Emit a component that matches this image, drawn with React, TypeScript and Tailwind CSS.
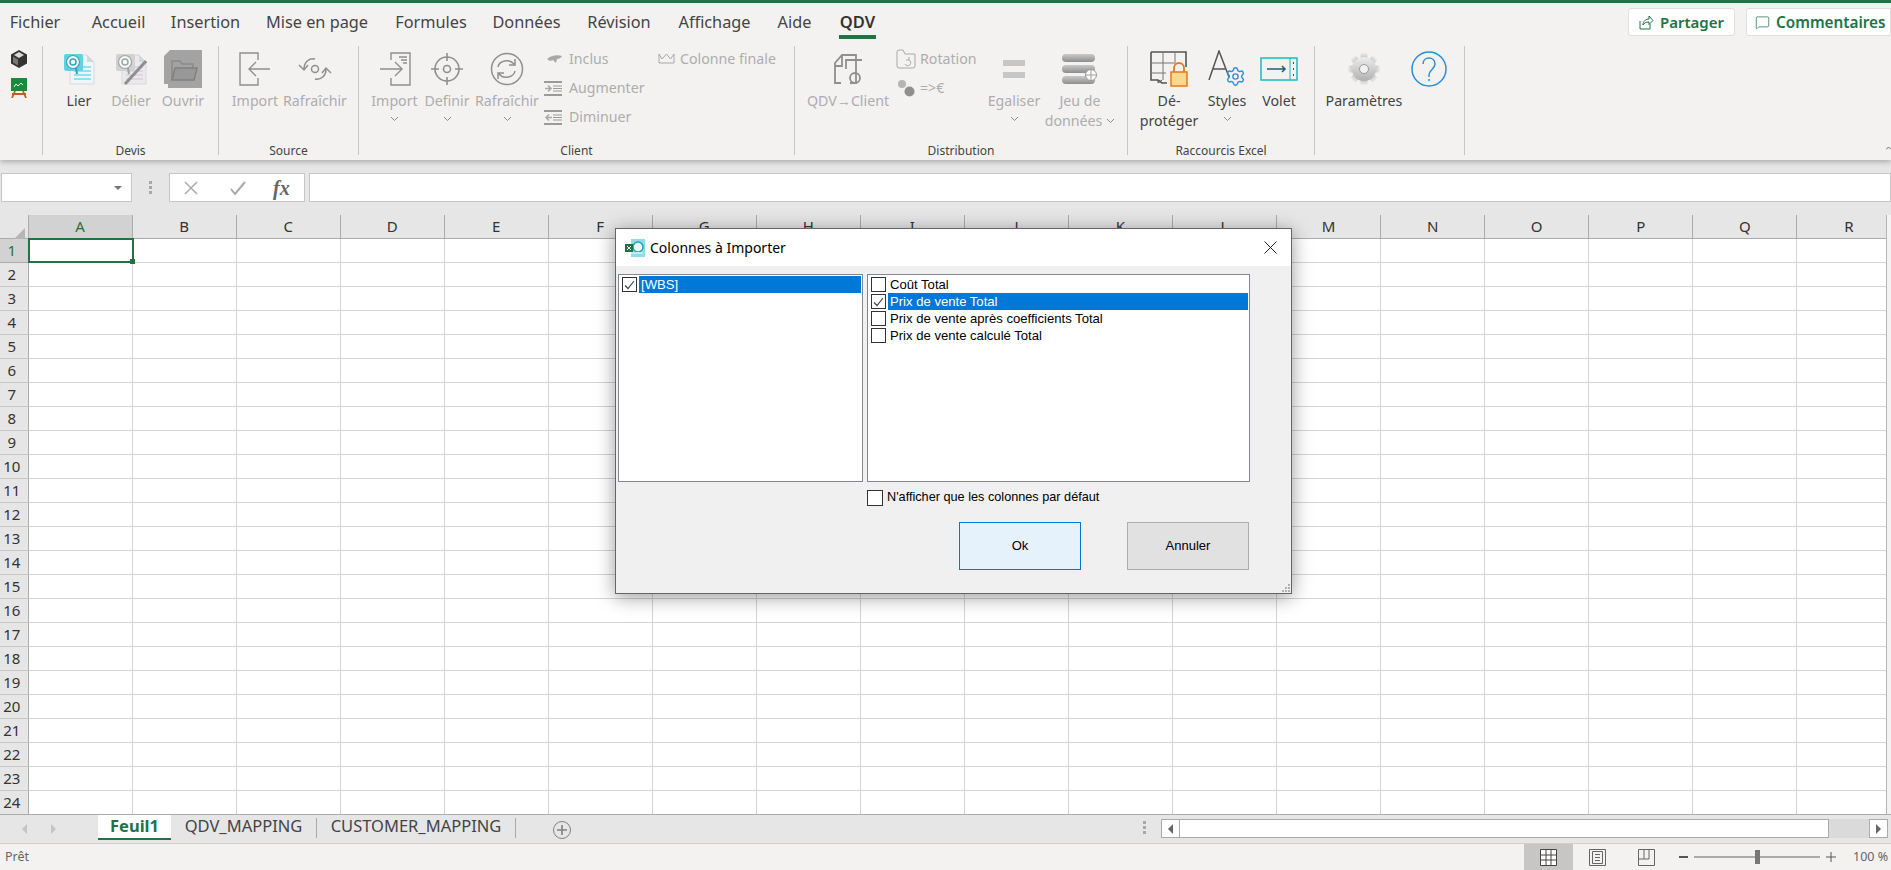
import type { ReactNode } from "react";
import { MessageSquare, Settings } from "lucide-react";

const tabs: [string, string][] = [
  ["Fichier", "w-[70px]"],
  ["Accueil", "w-[97px]"],
  ["Insertion", "w-[77px]"],
  ["Mise en page", "w-[146px]"],
  ["Formules", "w-[82px]"],
  ["Données", "w-[109px]"],
  ["Révision", "w-[76px]"],
  ["Affichage", "w-[115px]"],
  ["Aide", "w-[45px]"],
];
const columns = "ABCDEFGHIJKLMNOPQR".split("");
const rows = Array.from({ length: 24 }, (_, i) => i + 1);

const gray = "#8f8f8f";

function Chevron() {
  return (
    <svg width="9" height="6" viewBox="0 0 9 6" fill="none" stroke="#8a8a8a" strokeWidth="1">
      <path d="M1 1l3.5 3.5L8 1" />
    </svg>
  );
}

function Big({
  className,
  icon,
  label,
  sub,
  chev,
  off,
}: {
  className: string;
  icon: ReactNode;
  label: string;
  sub?: ReactNode;
  chev?: boolean;
  off?: boolean;
}) {
  return (
    <div className={`flex shrink-0 flex-col items-center text-[14.2px] leading-[20px] ${off ? "text-[#adadad]" : "text-[#444]"} ${className}`}>
      <div className="flex h-[45px] items-center justify-center">{icon}</div>
      <span className="whitespace-nowrap">{label}</span>
      {sub && <span className="flex items-center gap-1 whitespace-nowrap">{sub}</span>}
      {chev && (
        <span className="flex h-[16px] items-center">
          <Chevron />
        </span>
      )}
    </div>
  );
}

function Small({ icon, label, className }: { icon: ReactNode; label: string; className?: string }) {
  return (
    <div className={`flex h-[24px] items-center text-[14.2px] whitespace-nowrap text-[#adadad] ${className ?? ""}`}>
      <span className="flex w-[20px] justify-center">{icon}</span>
      <span className="ml-[5px]">{label}</span>
    </div>
  );
}

function Group({ className, label, children }: { className: string; label?: string; children: ReactNode }) {
  return (
    <div className={`mt-px flex h-[109px] shrink-0 flex-col border-r border-[#c8c6c4] ${className}`}>
      <div className="flex h-[97px] shrink-0">{children}</div>
      <div className="h-[16px] shrink-0 text-center text-[12px] leading-[16px] text-[#444]">{label}</div>
    </div>
  );
}

function Check({ on, className }: { on?: boolean; className?: string }) {
  return (
    <span className={`flex h-[15px] w-[15px] shrink-0 items-center justify-center border border-[#333] bg-white ${className ?? ""}`}>
      {on && (
        <svg width="11" height="10" viewBox="0 0 11 10" fill="none" stroke="#444" strokeWidth="1.2">
          <path d="M1 5.5l3 3L10 1" />
        </svg>
      )}
    </span>
  );
}

function ListRow({ label, on, selected }: { label: string; on?: boolean; selected?: boolean }) {
  return (
    <div className="flex h-[17px] items-center pl-[3px]">
      <Check on={on} />
      <span className={`ml-[2px] flex h-[17px] flex-1 items-center pl-[2px] ${selected ? "bg-[#0078d7] text-white" : "text-black"}`}>{label}</span>
    </div>
  );
}

function LierIcon({ mono }: { mono?: boolean }) {
  const doc = mono ? "#ece9ee" : "#eef6fb";
  const line = mono ? "#dcd6de" : "#8fe3ef";
  const blue = mono ? "#d2d2d2" : "#5fd3e3";
  const dark = mono ? "#a3a3a3" : "#3aa3bb";
  return (
    <svg width="32" height="32" viewBox="0 0 32 32">
      <path d="M7 2h17l7 7v22H7z" fill={doc} stroke="#d8d8d8" />
      <path d="M24 2v7h7z" fill="#cfd8dd" />
      <path d="M11 14h17M11 18h17M11 22h17M11 26h17" stroke={line} strokeWidth="2" />
      <rect x="1" y="1" width="19" height="17" rx="2" fill={blue} />
      <circle cx="10" cy="9" r="6.5" fill="#f4fbfd" stroke={dark} strokeWidth="1.2" />
      <circle cx="10" cy="9" r="3" fill="none" stroke={dark} strokeWidth="1.5" />
      <path d="M13 15l1 6" stroke={dark} strokeWidth="2" />
      {mono && <path d="M10 31L31 8" stroke="#8f8f8f" strokeWidth="3" />}
    </svg>
  );
}

function OuvrirIcon() {
  return (
    <svg width="38" height="38" viewBox="0 0 38 38">
      <path d="M6 0h32v38H4V34H0V6z" fill="#a3a3a3" />
      <path d="M8 30V11h8l2 3h11v4" fill="none" stroke="#8a8a8a" strokeWidth="1.5" />
      <path d="M8 30l3-12h22l-3 12z" fill="#989898" stroke="#808080" strokeWidth="1.5" />
    </svg>
  );
}

function IndentIcon({ out }: { out?: boolean }) {
  return (
    <svg width="20" height="15" viewBox="0 0 20 15" fill="none" stroke="#9a9a9a">
      <path d="M0 1h18M0 14h18" strokeWidth="2" />
      <path d="M9 5h9M9 7.5h9M9 10h9" />
      {out ? <path d="M8 7.5H2M5 4.5l-3 3 3 3" stroke="#a8a8a8" strokeWidth="1.5" /> : <path d="M1 7.5h6M4 4.5l3 3-3 3" stroke="#a8a8a8" strokeWidth="1.5" />}
    </svg>
  );
}

function ParamGear() {
  return (
    <svg width="34" height="34" viewBox="0 0 34 34">
      <defs>
        <linearGradient id="gearFill" x1="0" y1="0" x2="0" y2="1">
          <stop offset="0" stopColor="#ececec" />
          <stop offset="1" stopColor="#b0b0b0" />
        </linearGradient>
      </defs>
      {[0, 45, 90, 135, 180, 225, 270, 315].map((a) => (
        <rect key={a} x="13.5" y="1" width="7" height="8" rx="1.5" fill="url(#gearFill)" transform={`rotate(${a} 17 17)`} />
      ))}
      <circle cx="17" cy="17" r="12" fill="url(#gearFill)" />
      <circle cx="17" cy="17" r="4.5" fill="#f1f1f1" stroke="#9a9a9a" />
    </svg>
  );
}

export default function App() {
  return (
    <div className="relative flex h-[870px] w-[1891px] flex-col overflow-hidden bg-white font-['Noto_Sans',sans-serif] text-[#444]">
      <div className="relative z-10 h-[160px] shrink-0 border-t-[3px] border-[#217346] bg-[#f3f2f1] shadow-[0_2px_5px_rgba(0,0,0,0.25)]">
        <div className="flex h-[42px]">
          {tabs.map(([t, w]) => (
            <div key={t} className={`pt-[9px] text-center text-[16.3px] leading-[20px] whitespace-nowrap text-[#444] ${w}`}>
              {t}
            </div>
          ))}
          <div className="flex w-[81px] flex-col items-center pt-[9px] text-[16.5px] leading-[20px] font-semibold text-[#333]">
            QDV
            <span className="mt-[3px] h-[4px] w-[37px] bg-[#217346]" />
          </div>
          <div className="ml-auto flex pt-[5px]">
            <div className="flex h-[28px] w-[107px] items-center justify-center gap-[6px] rounded-[3px] border border-[#e1dfdd] bg-white text-[15px] font-semibold text-[#217346]">
              <svg width="15" height="15" viewBox="0 0 15 15" fill="none" stroke="#217346">
                <path d="M1 6v8h10V9M4 10c0-4 3-6 6-6V1l4 4.500-4 4V7c-3 0-5 1-6 3z" />
              </svg>
              Partager
            </div>
            <div className="ml-[11px] flex h-[28px] w-[145px] items-center gap-[6px] rounded-l-[3px] border border-[#e1dfdd] bg-white pl-[8px] text-[15.3px] font-semibold whitespace-nowrap text-[#217346]">
              <MessageSquare size={15} strokeWidth={1.2} />
              Commentaires
            </div>
          </div>
        </div>
        <div className="flex">
          <Group className="w-[43px]">
            <div className="flex w-[38px] flex-col items-center gap-[10px] pt-[4px]">
              <svg width="16" height="18" viewBox="0 0 16 18">
                <path d="M8 0l8 4.500v9L8 18l-8-4.500v-9z" fill="#333" />
                <path d="M8 2l5 3-5 3-5-3z" fill="#d8d8d8" />
                <path d="M2 6.500l5 3v6l-5-3z" fill="#777" />
              </svg>
              <svg width="16" height="20" viewBox="0 0 16 20">
                <path d="M4 13L1 20M12 13l3 7M1 16h14" stroke="#b5651d" strokeWidth="1.8" />
                <rect x="0" y="0" width="16" height="13" fill="#1a8a3c" />
                <path d="M3 9l2-3 2 2 3-3 2 2" stroke="#e5f5e5" fill="none" />
              </svg>
            </div>
          </Group>
          <Group className="w-[176px]" label="Devis">
            <div className="flex pl-[10px]">
              <Big className="w-[52px]" label="Lier" icon={<LierIcon />} />
              <Big className="w-[52px]" label="Délier" off icon={<LierIcon mono />} />
              <Big className="w-[52px]" label="Ouvrir" off icon={<OuvrirIcon />} />
            </div>
          </Group>
          <Group className="w-[140px]" label="Source">
            <div className="flex pl-[6px]">
              <Big
                className="w-[60px]"
                label="Import"
                off
                icon={
                  <svg width="32" height="34" viewBox="0 0 32 34" fill="none" stroke={gray} strokeWidth="1.4">
                    <path d="M19 8V1H1v32h18v-7M31 17H10M17 10l-7 7 7 7" />
                  </svg>
                }
              />
              <Big
                className="w-[60px]"
                label="Rafraîchir"
                off
                icon={
                  <svg width="34" height="28" viewBox="0 0 34 28" fill="none" stroke={gray} strokeWidth="1.5">
                    <circle cx="17" cy="14" r="3.500" />
                    <path d="M6 14C6 7 11 3 17 4M28 14c0 7-5 11-11 10M1 10l5 5 4-5M24 18l4-5 5 5" />
                  </svg>
                }
              />
            </div>
          </Group>
          <Group className="w-[436px]" label="Client">
            <div className="flex pl-[9px]">
              <Big
                className="w-[53px]"
                label="Import"
                off
                chev
                icon={
                  <svg width="32" height="34" viewBox="0 0 32 34" fill="none" stroke={gray} strokeWidth="1.4">
                    <path d="M12 8V1h19v32H12v-7M1 17h21M16 10l7 7-7 7M20 5h8M22 8h6M24 11h4" />
                  </svg>
                }
              />
              <Big
                className="w-[52px]"
                label="Definir"
                off
                chev
                icon={
                  <svg width="34" height="34" viewBox="0 0 34 34" fill="none" stroke={gray} strokeWidth="1.6">
                    <circle cx="17" cy="17" r="12" />
                    <circle cx="17" cy="17" r="3.500" />
                    <path d="M17 1v8M17 25v8M1 17h8M25 17h8" />
                  </svg>
                }
              />
              <Big
                className="w-[68px]"
                label="Rafraîchir"
                off
                chev
                icon={
                  <svg width="34" height="34" viewBox="0 0 34 34" fill="none" stroke={gray} strokeWidth="1.5">
                    <circle cx="17" cy="17" r="15.500" />
                    <path d="M8 15c1-6 11-9 16-3M25 19c-1 6-11 9-16 3M25 7v6h-6M8 27v-6h6" />
                  </svg>
                }
              />
              <div className="ml-[3px] flex w-[112px] flex-col gap-[5px] pt-px">
                <Small
                  label="Inclus"
                  icon={
                    <svg width="15" height="9" viewBox="0 0 15 9">
                      <path d="M0 4c3-3 10-5 15-3-1 2-3 3-5 3l-1 4-3-3-3 1z" fill="#a8a8a8" />
                    </svg>
                  }
                />
                <Small label="Augmenter" icon={<IndentIcon />} />
                <Small label="Diminuer" icon={<IndentIcon out />} />
              </div>
              <div className="flex flex-col pt-px">
                <Small
                  className="[&>span:last-child]:ml-[4px]"
                  label="Colonne finale"
                  icon={
                    <svg width="17" height="12" viewBox="0 0 17 12" fill="none" stroke="#a8a8a8">
                      <path d="M1 1l3 5 4.500-5 4 5 3.500-5v9H1z" />
                    </svg>
                  }
                />
              </div>
            </div>
          </Group>
          <Group className="w-[333px]" label="Distribution">
            <div className="flex pl-[5px]">
              <Big
                className="w-[96px]"
                label="QDV→Client"
                off
                icon={
                  <svg width="30" height="32" viewBox="0 0 30 32" fill="none" stroke={gray} strokeWidth="1.8">
                    <path d="M8 30H2V10l7-8h14v28h-6M9 2v11H2M13 16V7h16" />
                    <circle cx="22" cy="25" r="5" />
                  </svg>
                }
              />
              <div className="flex w-[89px] flex-col gap-[5px] pt-px">
                <Small
                  className="[&>span:last-child]:ml-[4px]"
                  label="Rotation"
                  icon={
                    <svg width="20" height="20" viewBox="0 0 20 20" fill="none" stroke="#a8a8a8">
                      <path d="M3 19h14a2 2 0 0 0 2-2V5H9L7 1H3a2 2 0 0 0-2 2v14a2 2 0 0 0 2 2z" />
                      <path d="M9 15a3 3 0 1 0 4-4M13 8v3h-3" />
                    </svg>
                  }
                />
                <Small
                  className="[&>span:last-child]:ml-[4px]"
                  label="=>€"
                  icon={
                    <svg width="18" height="18" viewBox="0 0 18 18">
                      <circle cx="5" cy="5" r="4" fill="#b5b5b5" />
                      <circle cx="12.500" cy="12.500" r="5" fill="#8f8f8f" />
                    </svg>
                  }
                />
              </div>
              <Big
                className="w-[58px]"
                label="Egaliser"
                off
                chev
                icon={
                  <div className="flex flex-col gap-[6px]">
                    <span className="block h-[6px] w-[22px] bg-[#c6c6c6]" />
                    <span className="block h-[6px] w-[22px] bg-[#c6c6c6]" />
                  </div>
                }
              />
              <Big
                className="w-[74px]"
                label="Jeu de"
                off
                sub={
                  <>
                    données <Chevron />
                  </>
                }
                icon={
                  <svg width="36" height="30" viewBox="0 0 36 30">
                    <defs>
                      <linearGradient id="barFill" x1="0" y1="0" x2="0" y2="1">
                        <stop offset="0" stopColor="#c9c9c9" />
                        <stop offset="1" stopColor="#8d8d8d" />
                      </linearGradient>
                    </defs>
                    <rect x="0" y="0" width="33" height="8" rx="4" fill="url(#barFill)" />
                    <rect x="0" y="11" width="33" height="8" rx="4" fill="url(#barFill)" />
                    <rect x="0" y="22" width="33" height="8" rx="4" fill="url(#barFill)" />
                    <circle cx="29" cy="21" r="5.500" fill="#fff" stroke="#999" />
                    <path d="M29 16v10M24 21h10" stroke="#999" />
                  </svg>
                }
              />
            </div>
          </Group>
          <Group className="w-[187px]" label="Raccourcis Excel">
            <div className="flex pl-[8px]">
              <Big
                className="w-[66px]"
                label="Dé-"
                sub="protéger"
                icon={
                  <svg width="38" height="36" viewBox="0 0 38 36" fill="none">
                    <path d="M1 1h35v15M1 1v28h7l4 3h5" stroke="#555" strokeWidth="1.6" />
                    <path d="M1 12h23M1 22h15M13 1v28M25 1v12" stroke="#777" />
                    <path d="M8 29v3l4-3" stroke="#555" />
                    <rect x="21" y="21" width="16" height="14" fill="#fbd88f" stroke="#e57b16" strokeWidth="1.5" />
                    <path d="M24 21v-4a5 5 0 0 1 10 0v4" stroke="#e57b16" strokeWidth="1.8" />
                  </svg>
                }
              />
              <Big
                className="w-[50px]"
                label="Styles"
                chev
                icon={
                  <div className="relative h-[37px] w-[38px]">
                    <svg width="22" height="30" viewBox="0 0 22 30" fill="none" stroke="#555" strokeWidth="1.5">
                      <path d="M1 30L11 1l10 26M5 19h12" />
                    </svg>
                    <Settings size={21} strokeWidth={1.6} color="#2b8fd6" className="absolute right-0 bottom-0" />
                  </div>
                }
              />
              <Big
                className="w-[54px]"
                label="Volet"
                icon={
                  <svg width="38" height="24" viewBox="0 0 38 24" fill="none">
                    <rect x="1" y="1" width="36" height="22" stroke="#17bfc0" strokeWidth="1.5" />
                    <path d="M30 1v22" stroke="#17bfc0" />
                    <path d="M7 12h18M22 9l3 3-3 3" stroke="#1f5f70" strokeWidth="1.5" />
                    <path d="M33.500 5v2M33.500 11v2M33.500 17v2" stroke="#1f5f70" />
                  </svg>
                }
              />
            </div>
          </Group>
          <Group className="w-[150px]">
            <div className="flex pl-[7px]">
              <Big className="w-[84px]" label="Paramètres" icon={<ParamGear />} />
              <Big
                className="w-[46px]"
                label=""
                icon={
                  <svg width="36" height="36" viewBox="0 0 36 36" fill="none" stroke="#2b8fd6" strokeWidth="1.5">
                    <circle cx="18" cy="18" r="17" />
                    <path d="M12 13c0-4 3-6 6-6s6 2 6 6c0 5-6 6-6 11v2M18 28v2" />
                  </svg>
                }
              />
            </div>
          </Group>
          <div className="flex flex-1 items-end justify-end pb-[5px]">
            <svg width="5" height="4" viewBox="0 0 5 4" fill="none" stroke="#666">
              <path d="M0 3.500L2.500 1 5 3.500" />
            </svg>
          </div>
        </div>
      </div>

      <div className="flex h-[55px] shrink-0 bg-[#e6e6e6] pt-[13px]">
        <div className="ml-px flex h-[29px] w-[131px] items-center justify-end border border-[#c6c6c6] bg-white pr-[9px]">
          <span className="h-0 w-0 border-x-[4px] border-t-[4px] border-x-transparent border-t-[#777]" />
        </div>
        <div className="flex h-[29px] w-[37px] flex-col items-center justify-center gap-[2px]">
          <span className="h-[3px] w-[3px] bg-[#a8a8a8]" />
          <span className="h-[3px] w-[3px] bg-[#a8a8a8]" />
          <span className="h-[3px] w-[3px] bg-[#a8a8a8]" />
        </div>
        <div className="flex h-[29px] w-[136px] items-center border border-[#c6c6c6] bg-white">
          <svg className="ml-[14px]" width="14" height="14" viewBox="0 0 14 14" stroke="#aaa" strokeWidth="1.5">
            <path d="M1 1l12 12M13 1L1 13" />
          </svg>
          <svg className="ml-[32px]" width="16" height="14" viewBox="0 0 16 14" fill="none" stroke="#aaa" strokeWidth="2">
            <path d="M1 8l4 5L15 1" />
          </svg>
          <span className="ml-[27px] font-['Liberation_Serif',serif] text-[20px] font-bold text-[#666] italic">fx</span>
        </div>
        <div className="ml-[4px] h-[29px] flex-1 border border-[#c6c6c6] bg-white" />
      </div>

      <div className="flex h-[599px] shrink-0 bg-[#f3f3f3]">
        <div className="h-full w-[1887px] shrink-0 overflow-hidden border-r border-[#b5b5b5] bg-white">
          <div className="grid w-[1902px] grid-cols-[28.5px_repeat(18,104.05px)] grid-rows-[24px_repeat(24,24px)] text-[15px]">
            <div className="flex items-center justify-center border-r border-b border-[#ababab] bg-[#e6e6e6]">
              <span className="mt-[2px] ml-[6px] h-0 w-0 border-t-[16px] border-l-[16px] border-t-transparent border-l-transparent [border-right:0] [border-bottom:16px_solid_#b5b5b5]" />
            </div>
            {columns.map((c, i) => (
              <div key={c} className={`flex items-center justify-center border-r border-b border-[#ababab] ${i === 0 ? "bg-[#d2d2d2] text-[#217346]" : "bg-[#e6e6e6] text-[#333]"}`}>
                {c}
              </div>
            ))}
            {rows.map((r) => (
              <div key={r} className="contents">
                <div className={`flex items-center justify-center border-r border-b border-[#ababab] pr-[4px] ${r === 1 ? "bg-[#d2d2d2] text-[#217346]" : "border-b-[#c8c8c8] bg-[#e6e6e6] text-[#333]"}`}>{r}</div>
                {columns.map((c, i) => (
                  <div key={c} className="relative border-r border-b border-[#d4d4d4]">
                    {r === 1 && i === 0 && (
                      <div className="absolute -top-[1px] -left-[1px] z-[1] h-[25px] w-[106px] border-2 border-[#217346]">
                        <span className="absolute -right-[3px] -bottom-[3px] h-[5px] w-[5px] bg-[#217346]" />
                      </div>
                    )}
                  </div>
                ))}
              </div>
            ))}
          </div>
        </div>
      </div>

      <div className="relative flex h-[29px] shrink-0 items-start border-t border-[#ababab] bg-[#e6e6e6] text-[16.5px] leading-[21px] text-[#444]">
        <div className="flex h-[28px] w-[98px] items-center pl-[22px]">
          <span className="h-0 w-0 border-y-[5px] border-r-[5px] border-y-transparent border-r-[#c4c4c4]" />
          <span className="ml-[24px] h-0 w-0 border-y-[5px] border-l-[5px] border-y-transparent border-l-[#c4c4c4]" />
        </div>
        <div className="flex h-[25px] w-[73px] justify-center border-b-2 border-[#217346] bg-white font-bold text-[#217346]">Feuil1</div>
        <div className="mt-[3px] flex h-[20px] w-[146px] justify-center border-r border-[#a8a8a8] leading-[15px]">QDV_MAPPING</div>
        <div className="mt-[3px] flex h-[20px] w-[199px] justify-center border-r border-[#a8a8a8] leading-[15px]">CUSTOMER_MAPPING</div>
        <svg className="mt-[6px] ml-[37px]" width="18" height="18" viewBox="0 0 18 18" fill="none" stroke="#808080">
          <circle cx="9" cy="9" r="8.500" />
          <path d="M9 4v10M4 9h10" strokeWidth="1.600" />
        </svg>
        <div className="mt-[6px] ml-[572px] flex w-[3px] flex-col gap-[2px]">
          <span className="h-[3px] w-[3px] bg-[#a8a8a8]" />
          <span className="h-[3px] w-[3px] bg-[#a8a8a8]" />
          <span className="h-[3px] w-[3px] bg-[#a8a8a8]" />
        </div>
        <div className="mt-[4px] ml-[15px] flex h-[19px] w-[727px] bg-[#dadada]">
          <div className="flex w-[19px] items-center justify-center border border-[#ababab] bg-white">
            <span className="h-0 w-0 border-y-[5px] border-r-[5px] border-y-transparent border-r-[#666]" />
          </div>
          <div className="w-[649px] border-y border-r border-[#ababab] bg-white" />
          <div className="flex-1" />
          <div className="flex w-[19px] items-center justify-center border border-[#ababab] bg-white">
            <span className="h-0 w-0 border-y-[5px] border-l-[5px] border-y-transparent border-l-[#666]" />
          </div>
        </div>
      </div>

      <div className="flex h-[27px] shrink-0 items-center border-t border-[#d0d0d0] bg-[#f3f2f1] text-[12.5px] text-[#666]">
        <span className="pl-[5px]">Prêt</span>
        <div className="ml-auto flex h-full w-[49px] items-center justify-center bg-[#c8c6c4]">
          <svg width="17" height="17" viewBox="0 0 17 17" fill="#fff" stroke="#444">
            <path d="M.5.500h16v16H.5zM6 .500v16M11 .500v16M.5 6h16M.5 11h16" />
          </svg>
        </div>
        <div className="flex h-full w-[49px] items-center justify-center">
          <svg width="17" height="17" viewBox="0 0 17 17" fill="none" stroke="#666">
            <path d="M.5.500h16v16H.5zM3.500 2.500h10v12h-10zM6 5.500h5M6 8.500h5M6 11.500h5" />
          </svg>
        </div>
        <div className="flex h-full w-[49px] items-center justify-center">
          <svg width="17" height="17" viewBox="0 0 17 17" fill="none" stroke="#666">
            <path d="M.5.500h16v16H.5zM6 .500v9.500h5V.500M.5 10H6" />
          </svg>
        </div>
        <div className="ml-[8px] h-[1.500px] w-[9px] bg-[#555]" />
        <div className="relative ml-[6px] h-[1.500px] w-[126px] bg-[#aaa]">
          <span className="absolute top-[-6px] left-[61px] h-[14px] w-[5px] bg-[#777]" />
        </div>
        <svg className="ml-[6px]" width="10" height="10" viewBox="0 0 10 10" stroke="#555">
          <path d="M0 5h10M5 0v10" />
        </svg>
        <span className="ml-[17px] w-[38px] whitespace-nowrap">100 %</span>
      </div>

      <div className="absolute top-[228px] left-[615px] z-20 flex h-[366px] w-[677px] flex-col border border-[#666] bg-[#f0f0f0] shadow-[0_3px_18px_rgba(0,0,0,0.4)]">
        <div className="flex h-[37px] shrink-0 items-center bg-white pl-[9px] text-[14px] text-black">
          <svg width="20" height="20" viewBox="0 0 20 20">
            <rect x="6" y="1" width="14" height="18" fill="#8fdbe8" />
            <circle cx="13" cy="9" r="5" fill="#eaf9fb" stroke="#2a9fb8" strokeWidth="1.500" />
            <path d="M6 15h12" stroke="#bfeaf0" strokeWidth="2" />
            <rect x="0" y="6" width="8" height="8" fill="#217346" />
            <path d="M2 8l4 4M6 8l-4 4" stroke="#fff" />
          </svg>
          <span className="ml-[5px]">Colonnes à Importer</span>
          <svg className="mr-[14px] ml-auto" width="13" height="13" viewBox="0 0 13 13" stroke="#222">
            <path d="M.5.500l12 12M12.500.500l-12 12" />
          </svg>
        </div>
        <div className="flex flex-1 flex-col pt-[8px] pl-[2px] font-['Liberation_Sans',sans-serif] text-[13.1px] text-black">
          <div className="flex">
            <div className="h-[208px] w-[245px] border border-[#828790] bg-white pt-px pr-px">
              <ListRow label="[WBS]" on selected />
            </div>
            <div className="ml-[4px] h-[208px] w-[383px] border border-[#828790] bg-white pt-px pr-px">
              <ListRow label="Coût Total" />
              <ListRow label="Prix de vente Total" on selected />
              <ListRow label="Prix de vente après coefficients Total" />
              <ListRow label="Prix de vente calculé Total" />
            </div>
          </div>
          <div className="mt-[8px] ml-[249px] flex h-[16px] items-center text-[12.7px]">
            <Check className="h-[16px] w-[16px]" />
            <span className="ml-[4px]">N&apos;afficher que les colonnes par défaut</span>
          </div>
          <div className="mt-[16px] ml-[341px] flex text-[13px]">
            <div className="flex h-[48px] w-[122px] items-center justify-center border border-[#0078d7] bg-[#e5f1fb]">Ok</div>
            <div className="ml-[46px] flex h-[48px] w-[122px] items-center justify-center border border-[#adadad] bg-[#e1e1e1]">Annuler</div>
          </div>
        </div>
        <svg className="absolute right-[1px] bottom-[1px]" width="8" height="8" viewBox="0 0 8 8" fill="#b0b0b0">
          <rect x="6" y="0" width="2" height="2" />
          <rect x="3" y="3" width="2" height="2" />
          <rect x="6" y="3" width="2" height="2" />
          <rect x="0" y="6" width="2" height="2" />
          <rect x="3" y="6" width="2" height="2" />
          <rect x="6" y="6" width="2" height="2" />
        </svg>
      </div>
    </div>
  );
}
